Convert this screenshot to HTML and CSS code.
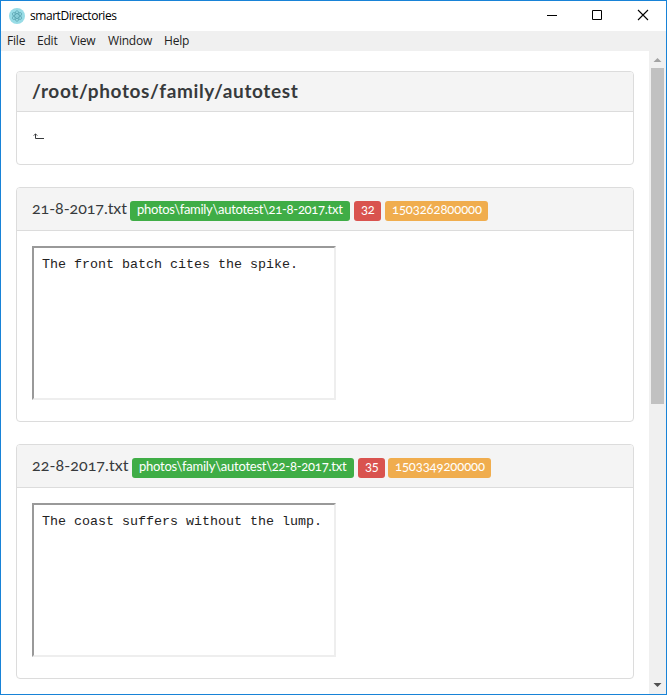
FILE: index.html
```html
<!DOCTYPE html>
<html lang="en">
<head>
<meta charset="utf-8">
<title>smartDirectories</title>
<link rel="stylesheet" href="styles.css">
</head>
<body>
<div class="window">
  <header class="titlebar">
    <svg class="logo" width="16" height="16" viewBox="0 0 16 16"><circle cx="8" cy="8" r="8" fill="#98dce6"/><g fill="none" stroke="#4c98a5" stroke-width=".6"><ellipse cx="8" cy="8" rx="5.300" ry="2.100" transform="rotate(30 8 8)"/><ellipse cx="8" cy="8" rx="5.300" ry="2.100" transform="rotate(90 8 8)"/><ellipse cx="8" cy="8" rx="5.300" ry="2.100" transform="rotate(150 8 8)"/></g><circle cx="8" cy="8" r=".6" fill="#4c98a5"/></svg>
    <span class="title"><span class="fit">smartDirectories</span></span>
    <svg class="controls" width="120" height="30" viewBox="0 0 120 30" fill="none" stroke="#000"><path d="M1 14.500h10M46.500 9.500h9v9h-9z"/><path d="M92 9l10 10M102 9l-10 10" stroke-width="1.1"/></svg>
  </header>
  <nav class="menu"><span class="file">File</span><span class="edit">Edit</span><span class="view">View</span><span class="win">Window</span><span>Help</span></nav>
  <div class="viewport">
    <main>
      <section class="card root">
        <h1><span>/root/photos/family/autotest</span></h1>
        <div class="body"><svg width="12" height="8" viewBox="0 0 12 8" fill="none" stroke="#373a3c"><path d="M2.500 1v4.500h8.500"/><path d="M.5 2.500l2-1.500 2 1.500" stroke-width=".8"/></svg></div>
      </section>
      <section class="card">
        <div class="head"><span class="name">21-8-2017.txt</span><span class="tag green"><span>photos\family\autotest\21-8-2017.txt</span></span><span class="tag red"><span>32</span></span><span class="tag orange"><span>1503262800000</span></span></div>
        <div class="body"><div class="frame">The front batch cites the spike.</div></div>
      </section>
      <section class="card second">
        <div class="head"><span class="name">22-8-2017.txt</span><span class="tag green"><span>photos\family\autotest\22-8-2017.txt</span></span><span class="tag red"><span>35</span></span><span class="tag orange"><span>1503349200000</span></span></div>
        <div class="body"><div class="frame">The coast suffers without the lump.</div></div>
      </section>
    </main>
    <div class="scrollbar">
      <svg width="17" height="17" viewBox="0 0 17 17"><path d="M4.500 11h8L8.500 7z" fill="#a3a3a3"/></svg>
      <div class="thumb"></div>
      <svg class="down" width="17" height="17" viewBox="0 0 17 17"><path d="M4.500 6h8L8.500 10z" fill="#505050"/></svg>
    </div>
  </div>
</div>
</body>
</html>
```
FILE: styles.css
```css
* { box-sizing: border-box; }
body { margin: 0; background: #fff; color: #373a3c; overflow: hidden; }
.window { width: 667px; height: 695px; border: 1px solid #1883d7; display: flex; flex-direction: column; }
.titlebar { height: 30px; display: flex; align-items: center; padding-left: 8px; font: 12px/30px "Open Sans", sans-serif; color: #000; }
.title { margin-left: 5px; flex: 1; }
.title .fit { letter-spacing: -.45px; }
.menu { height: 20px; background: #f0f0f0; display: flex; font: 12px/20px "Open Sans", sans-serif; color: #222; padding-left: 6px; }
.file { width: 30px; }
.edit { width: 33px; }
.view { width: 38px; }
.win { width: 56px; }
.menu span { letter-spacing: -.2px; }
.viewport { flex: 1; display: flex; min-height: 0; }
main { flex: 1; padding: 20px 15px 0; }
.card { border: 1px solid #dcdcdc; border-radius: 4px; height: 235px; margin-bottom: 22px; }
.card.root { height: 94px; }
h1 { margin: 0; height: 40px; padding-left: 15px; background: #f4f4f4; border-bottom: 1px solid #dcdcdc; font: 700 19px/38px Lato, sans-serif; letter-spacing: .62px; border-radius: 3px 3px 0 0; white-space: nowrap; }
.body { padding: 15px; }
.root .body { padding: 21px 16px; }
.root .body svg { display: block; }
.head { height: 43px; background: #f4f4f4; border-bottom: 1px solid #dcdcdc; padding: 13px 15px 0; display: flex; border-radius: 3px 3px 0 0; white-space: nowrap; }
.name { width: 98px; font: 16px/14px Lato, sans-serif; font-feature-settings: "onum"; letter-spacing: -.05px; }
.tag { height: 20px; border-radius: 3px; color: #fff; font: 13px/17px Lato, sans-serif; font-feature-settings: "onum"; padding-left: 7px; margin-right: 4px; }
.green { width: 220px; background: #3fad46; letter-spacing: -.29px; }
.red { width: 27px; background: #d9534f; letter-spacing: -.2px; }
.orange { width: 103px; background: #f0ad4e; letter-spacing: -.1px; }
.second .name { width: 100px; letter-spacing: .08px; }
.second .green { width: 222px; letter-spacing: -.24px; }
.second .red { margin-right: 3px; }
.frame { width: 304px; height: 154px; border: 2px solid; border-color: #999 #eee #eee #999; padding: 9px 8px; font: 13.33px/16px "Liberation Mono", monospace; color: #222; white-space: nowrap; }
.scrollbar { width: 17px; background: #f0f0f0; display: flex; flex-direction: column; }
.scrollbar svg { display: block; }
.thumb { width: 13px; height: 336px; margin-left: 2px; background: #c1c1c1; }
.down { margin-top: auto; }
```
